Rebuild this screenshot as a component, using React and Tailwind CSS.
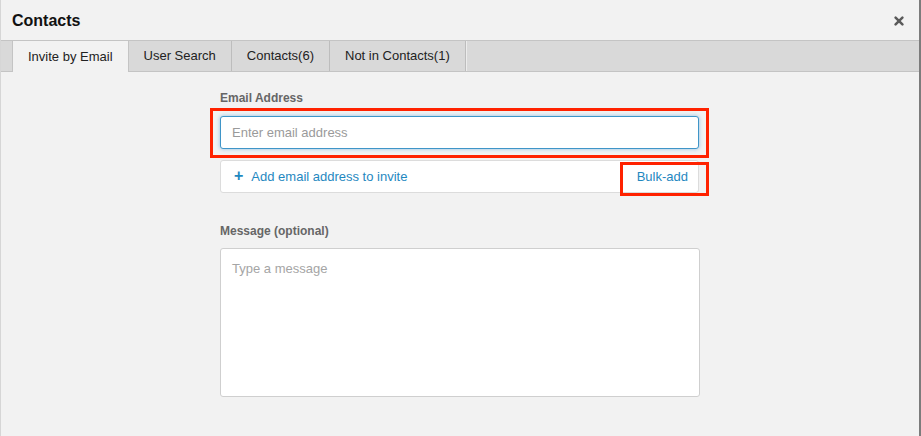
import React from "react";

export default function App() {
  const tabs = ["Invite by Email", "User Search", "Contacts(6)", "Not in Contacts(1)"];
  return (
    <div
      className="w-[921px] h-[436px] bg-[#f2f2f2] border-l border-l-[#d6d6d6] border-r-2 border-r-[#7c7c7c] overflow-hidden text-[#222]"
      style={{ fontFamily: '"Liberation Sans", Arial, sans-serif' }}
    >
      {/* Title bar */}
      <div className="h-[40px] flex items-center justify-between pl-[11px] pr-[15px] pt-[1px]">
        <div className="text-[16px] font-bold text-[#111]">Contacts</div>
        <svg width="10" height="10" viewBox="0 0 10 10">
          <path d="M1.6 1.6 L8.4 8.4 M8.4 1.6 L1.6 8.4" stroke="#5a5a5a" strokeWidth="2.5" strokeLinecap="round" />
        </svg>
      </div>

      {/* Tabs */}
      <div className="h-[32px] bg-[#d9d9d9] border-y border-[#c4c4c4] flex pl-[11px]">
        {tabs.map((t, i) => (
          <div
            key={t}
            className={
              i === 0
                ? "h-[31px] px-[15px] flex items-center text-[13px] bg-[#f2f2f2] border-x border-[#c4c4c4] text-[#222] relative z-10"
                : "h-[30px] px-[15px] flex items-center text-[13px] border-r border-[#bdbdbd] text-[#222]"
            }
          >
            {t}
          </div>
        ))}
        <div className="h-[30px] border-l border-[#ececec]" />
      </div>

      {/* Body */}
      <div className="ml-[219px] w-[480px] pt-[19px]">
        <div className="text-[12px] leading-[14px] font-bold text-[#666]">Email Address</div>

        <div className="relative mt-[11px]">
          <div className="h-[33px] w-[479px] bg-white border border-[#3f95c8] rounded-[3px] shadow-[0_0_4px_rgba(80,160,220,0.6)] flex items-center px-[11px] text-[13px] text-[#9a9a9a]">
            Enter email address
          </div>
          <div className="absolute -left-[10px] -right-[9px] -top-[8px] -bottom-[9px] border-[3px] border-[#ff2200] pointer-events-none" />
        </div>

        <div className="relative mt-[11px] h-[33px] w-[479px] bg-white border border-[#dcdcdc] rounded-[3px] flex items-center justify-between pl-[13px] pr-[10px] text-[13px] text-[#1f88bf]">
          <div className="flex items-center">
            <span className="text-[16px] font-bold leading-none mr-[8px] -mt-[1px]">+</span>
            <span>Add email address to invite</span>
          </div>
          <span>Bulk-add</span>
          <div className="absolute left-[399px] -right-[11px] top-[1px] -bottom-[4px] border-[3px] border-[#ff2200] pointer-events-none" />
        </div>

        <div className="mt-[31px] text-[12px] leading-[14px] font-bold text-[#666]">Message (optional)</div>
        <div className="mt-[10px] h-[149px] w-[480px] bg-white border border-[#cfcfcf] rounded-[3px] px-[11px] pt-[12px] text-[13px] leading-[16px] text-[#a5a5a5]">
          Type a message
        </div>
      </div>
    </div>
  );
}
